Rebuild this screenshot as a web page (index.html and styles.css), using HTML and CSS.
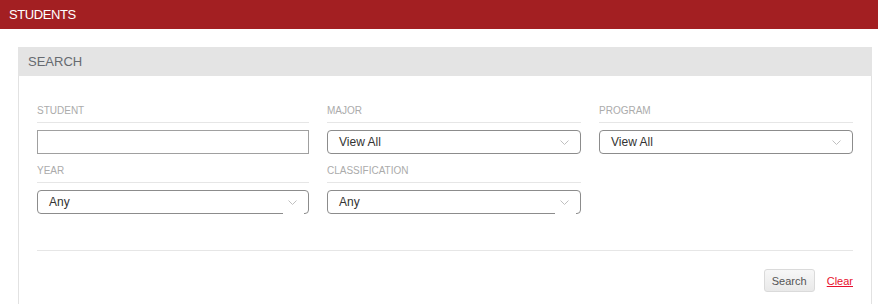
FILE: index.html
```html
<!DOCTYPE html>
<html>
<head>
<meta charset="utf-8">
<link rel="stylesheet" href="styles.css">
</head>
<body>
<header class="topbar">STUDENTS</header>
<section class="panel">
  <div class="panel-heading">SEARCH</div>
  <div class="panel-body">
    <div class="fields">
      <div class="field">
        <div class="label">STUDENT</div>
        <div class="textbox"></div>
      </div>
      <div class="field">
        <div class="label">MAJOR</div>
        <div class="select"><span>View All</span><svg class="chev" width="9" height="5" viewBox="0 0 9 5"><path d="M0.5 0.5 L4.5 4.5 L8.5 0.5" fill="none" stroke="#c0c0c0" stroke-width="1"/></svg></div>
      </div>
      <div class="field">
        <div class="label">PROGRAM</div>
        <div class="select"><span>View All</span><svg class="chev" width="9" height="5" viewBox="0 0 9 5"><path d="M0.5 0.5 L4.5 4.5 L8.5 0.5" fill="none" stroke="#c0c0c0" stroke-width="1"/></svg></div>
      </div>
      <div class="field">
        <div class="label">YEAR</div>
        <div class="select select-cut"><span>Any</span><svg class="chev" width="9" height="5" viewBox="0 0 9 5"><path d="M0.5 0.5 L4.5 4.5 L8.5 0.5" fill="none" stroke="#c0c0c0" stroke-width="1"/></svg></div>
      </div>
      <div class="field">
        <div class="label">CLASSIFICATION</div>
        <div class="select select-cut"><span>Any</span><svg class="chev" width="9" height="5" viewBox="0 0 9 5"><path d="M0.5 0.5 L4.5 4.5 L8.5 0.5" fill="none" stroke="#c0c0c0" stroke-width="1"/></svg></div>
      </div>
    </div>
    <div class="divider"></div>
    <div class="actions">
      <button class="btn">Search</button>
      <a class="clear" href="#">Clear</a>
    </div>
  </div>
</section>
</body>
</html>
```

FILE: styles.css
```css
html, body {
  margin: 0;
  padding: 0;
  background: #fff;
  font-family: "Liberation Sans", Arial, sans-serif;
}
.topbar {
  height: 29px;
  line-height: 29px;
  background: #a31f22;
  color: #fff;
  font-size: 13px;
  letter-spacing: -0.4px;
  padding-left: 9px;
}
.panel {
  margin: 18px 6px 0 18px;
  border-left: 1px solid #e2e2e2;
  border-right: 1px solid #e2e2e2;
}
.panel-heading {
  height: 29px;
  line-height: 29px;
  background: #e4e4e4;
  color: #666a70;
  font-size: 13px;
  padding-left: 10px;
  margin-left: -1px;
  margin-right: -1px;
}
.panel-body {
  padding: 28px 18px 20px 18px;
}
.fields {
  display: grid;
  grid-template-columns: 272px 254px 254px;
  column-gap: 18px;
}
.field {
  margin-bottom: 10px;
}
.label {
  font-size: 10px;
  line-height: 14px;
  color: #ababab;
  padding-bottom: 4px;
  border-bottom: 1px solid #e6e6e6;
  margin-bottom: 7px;
}
.textbox {
  height: 22px;
  border: 1px solid #a0a0a0;
}
.select {
  position: relative;
  height: 22px;
  border: 1px solid #8c8c8c;
  border-radius: 4px;
  display: flex;
  align-items: center;
  justify-content: space-between;
  padding: 0 11px 0 11px;
  font-size: 12px;
  color: #333;
}
.select-cut::after {
  content: "";
  position: absolute;
  right: 4px;
  bottom: -1px;
  width: 21px;
  height: 1px;
  background: #fff;
}
.chev {
  display: block;
  margin-top: 1px;
}
.divider {
  height: 1px;
  background: #e6e6e6;
  margin-top: 26px;
}
.actions {
  display: flex;
  justify-content: flex-end;
  align-items: center;
  gap: 12px;
  margin-top: 18px;
}
.btn {
  height: 23px;
  width: 51px;
  padding: 0;
  font-family: "Liberation Sans", Arial, sans-serif;
  font-size: 11px;
  color: #555;
  background: linear-gradient(#f7f7f7, #e9e9e9);
  border: 1px solid #dadada;
  border-radius: 3px;
}
.clear {
  font-size: 11px;
  color: #e8112d;
  text-decoration: underline;
}
```
